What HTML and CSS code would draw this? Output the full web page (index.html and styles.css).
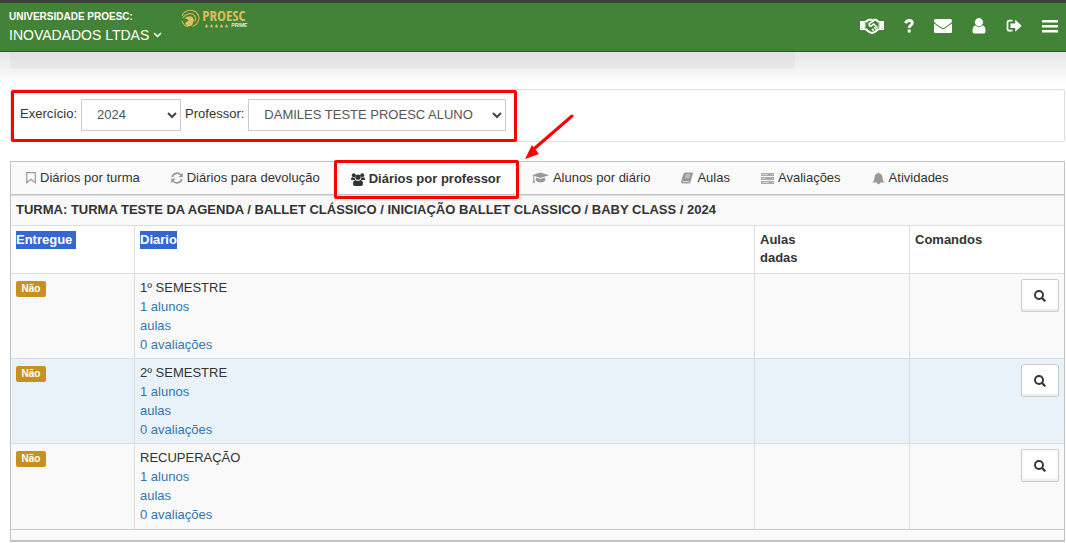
FILE: index.html
```html
<!DOCTYPE html>
<html lang="pt-BR">
<head>
<meta charset="utf-8">
<title>Diários por professor</title>
<link rel="stylesheet" href="styles.css">
</head>
<body>
<header class="topbar">
  <button class="school" type="button">
    <span class="school-label">UNIVERSIDADE PROESC:</span>
    <span class="school-name">INOVADADOS LTDAS
      <svg width="9" height="6" viewBox="0 0 9 6"><path d="M1 1l3.500 3.500L8 1" fill="none" stroke="currentColor" stroke-width="1.500"/></svg>
    </span>
  </button>
  <a class="logo" href="#" aria-label="Proesc Prime">
    <svg width="19" height="19" viewBox="0 0 19 19">
      <path d="M1 7C2.500 2.500 7 .5 11.500 1.500 17 3 19.500 8 17 13c-1 2-3 3.800-5.500 4.500" fill="none" stroke="#cdb04e" stroke-width="1.200"/>
      <path d="M1.500 9C5 4.500 10 3.500 13 6c1.800 1.600 2 4 .8 6.500M1 12c1 3 3 5 6 5.700" fill="none" stroke="#cdb04e" stroke-width="1.200"/>
      <path d="M3.500 9.500C6 7 9 6.500 11.500 8l1.500 3-2 5.500-4.500 1L4 14l3.500-2.500L6 10z" fill="#dcc162"/>
    </svg>
    <span class="logo-words">
      <span class="logo-name">PROESC</span>
      <span class="logo-sub">
        <svg width="23" height="4" viewBox="0 0 23 4" fill="#d9bd58"><path d="M0 1.500h3L2.500 3.500H.5zM5 1.500h3l-.5 2h-2zM10 1.500h3l-.5 2h-2zM15 1.500h3l-.5 2h-2zM20 1.500h3l-.5 2h-2zM1 .5h1v1H1zM6 .5h1v1H6zM11 .5h1v1h-1zM16 .5h1v1h-1zM21 .5h1v1h-1z"/></svg>
        <span>PRIME</span>
      </span>
    </span>
  </a>
  <nav class="tools">
    <a href="#" aria-label="Parcerias"><svg width="24" height="16" viewBox="0 0 24 16"><path fill="#fff" d="M0 3h5L8.500.8h3l1 .6 1-.6h3L19 3h5v9h-5l-4 3-3 .9-3-.9-4-3H0z"/><path fill="#438337" d="M6 5l3-2.300h6.500L18.200 5v4.800L14.500 13l-2.500.9L9.500 13 6 10z"/><path d="M14 2.500L9.300 5.500q-.6 2.600 1.700 2.700L13.700 6l4 4M12 11l1.800 1.800M14 9.300l2 2" fill="none" stroke="#fff" stroke-width="1.600"/><path d="M1.500 10.500h1M21.500 10.500h1M5.300 4v7M18.800 4v7" stroke="#438337" stroke-width=".7"/></svg></a>
    <a href="#" aria-label="Ajuda"><svg width="10" height="14" viewBox="0 0 10 14"><path d="M1.500 4.200C2.200 2.200 3.300 1.500 5 1.500c2 0 3.300 1 3.300 2.500C8.300 6.300 5.200 6.200 5.200 9" fill="none" stroke="#fff" stroke-width="2.800"/><path d="M3.700 10.500h3v3h-3z" fill="#fff"/></svg></a>
    <a href="#" aria-label="Mensagens"><svg width="18" height="14" viewBox="0 0 18 14"><path fill="#fff" d="M1.500 0h15Q18 0 18 1.500C18 3 17 4 16 4.700L11 8.200Q9 9.600 7 8.200L2 4.700C1 4 0 3 0 1.500Q0 0 1.500 0zM0 4.500l6.300 4.600Q9 11 11.700 9.100L18 4.500v8q0 1.500-1.500 1.500h-15Q0 14 0 12.500z"/></svg></a>
    <a href="#" aria-label="Perfil"><svg width="14" height="16" viewBox="0 0 14 16"><path fill="#fff" d="M7 0a4 4.200 0 0 1 2.800 7.300Q7 9.600 4.200 7.300A4 4.200 0 0 1 7 0zM3.500 7.600Q7 10.800 10.500 7.600 13.500 8 13.500 13q0 2.600-2.500 2.600H3Q.5 15.600.5 13 .5 8 3.500 7.600z"/></svg></a>
    <a href="#" aria-label="Sair"><svg width="16" height="14" viewBox="0 0 16 14"><path d="M6.500 1.700h-3Q1.500 1.700 1.500 3.700v6q0 2 2 2h3" fill="none" stroke="#fff" stroke-width="1.700"/><path fill="#fff" d="M4.500 4.500h4.700V.7L15.700 6.700 9.200 12.700V9H4.500z"/></svg></a>
    <a href="#" aria-label="Menu"><svg width="16" height="13" viewBox="0 0 16 13"><path fill="#fff" d="M0 0h16v2.500H0zM0 5h16v2.500H0zM0 10h16v2.500H0z"/></svg></a>
  </nav>
</header>

<main class="content">
  <div class="ribbon"></div>

  <form class="filters">
    <div class="mark"></div>
    <label for="year">Exercício:</label>
    <select id="year" class="year"><option>2024</option></select>
    <label for="teacher">Professor:</label>
    <select id="teacher" class="teacher"><option>DAMILES TESTE PROESC ALUNO</option></select>
  </form>

  <section class="widget">
    <nav class="tabs">
      <a href="#"><svg width="10" height="12" viewBox="0 0 10 12"><path d="M.7.700h8.600v10L5 7.200.7 10.700z" fill="none" stroke="#999" stroke-width="1.200"/></svg>Diários por turma</a>
      <a href="#"><svg width="12" height="12" viewBox="0 0 12 12"><path d="M1.200 5C2.200.800 7.500 0 10 3M10.800 7C9.800 11.200 4.500 12 2 9" fill="none" stroke="#999" stroke-width="1.700"/><path fill="#999" d="M11.800.7v4.500H7.300zM.2 11.300V6.800h4.500z"/></svg>Diários para devolução</a>
      <a href="#" class="active"><svg width="14" height="13" viewBox="0 0 14 13" fill="#333"><circle cx="2.800" cy="2.300" r="2"/><circle cx="11.200" cy="2.300" r="2"/><path d="M0 6.500Q0 4 1.200 4.200q1.500.8 2.700.1Q3.500 6 4.300 7H1Q0 7 0 6.500zM14 6.500Q14 4 12.800 4.200q-1.500.8-2.700.1Q10.500 6 9.700 7H13q1 0 1-.5z"/><circle cx="7" cy="4.200" r="2.600"/><path d="M4.300 6.900Q7 8.700 9.700 6.900 12 7.300 12 11q0 2-1.800 2H3.800Q2 13 2 11q0-3.700 2.300-4.100z"/></svg>Diários por professor
        <svg class="arrow" width="50" height="46" viewBox="0 0 50 46"><path d="M48 2L11 34" stroke="#f00" stroke-width="3" stroke-linecap="round"/><path d="M1 45l7-14 7 9z" fill="#f00"/></svg>
      </a>
      <a href="#"><svg width="17" height="12" viewBox="0 0 17 12" fill="#999"><path d="M8.500.5L17 3.200 8.500 6 0 3.200z"/><path d="M4 5.500l4.500 1.500L13 5.500l.3 3q-2 2-4.800 2t-4.800-2zM1.300 4h1v3.500l.6 3.500H.8l.5-3.500z"/></svg>Alunos por diário</a>
      <a href="#"><svg width="12" height="12" viewBox="0 0 12 12"><path fill="#999" d="M4 .5h7.500q.7.300.4 1L9.500 10q-.3 1.500-2 1.500H1.500Q-.3 11 .2 9L2.500 2Q3 .5 4 .5z"/><path d="M4.500 3h4.700M4 5h4.700M1.500 9.700h6.300" stroke="#fafafa" stroke-width=".7"/></svg>Aulas</a>
      <a href="#"><svg width="13" height="11" viewBox="0 0 13 11"><path fill="#aaa" d="M0 0h13v3H0zM0 4h13v3H0zM0 8h13v3H0z"/><path d="M1 1.500h6M1 5.500h3M1 9.500h7M11 1.500h1M11 5.500h1M11 9.500h1" stroke="#d5d5d5"/></svg>Avaliações</a>
      <a href="#"><svg width="13" height="13" viewBox="0 0 13 13"><path fill="#999" d="M5.800.5h1.400v1Q10.500 2 10.500 5.500q0 3.500 2.300 5H8.200a1.700 1.700 0 0 1-3.400 0H.2q2.300-1.500 2.300-5 0-3.500 3.300-4z"/></svg>Atividades</a>
    </nav>

    <table class="diaries">
      <colgroup><col class="col-state"><col><col class="col-side"><col class="col-side"></colgroup>
      <thead>
        <tr class="class-row"><th colspan="4">TURMA: TURMA TESTE DA AGENDA / BALLET CLÁSSICO / INICIAÇÃO BALLET CLASSICO / BABY CLASS / 2024</th></tr>
        <tr class="head-row">
          <th><span class="selected">Entregue&nbsp;</span></th>
          <th><span class="selected">Diario</span></th>
          <th>Aulas<br>dadas</th>
          <th>Comandos</th>
        </tr>
      </thead>
      <tbody>
        <tr>
          <td><span class="badge">Não</span></td>
          <td><div class="term">1º SEMESTRE</div><a href="#">1 alunos</a><a href="#">aulas</a><a href="#">0 avaliações</a></td>
          <td></td>
          <td><button class="view" type="button" aria-label="Ver diário"><svg width="12" height="12" viewBox="0 0 12 12"><circle cx="5" cy="5" r="4" fill="none" stroke="#333" stroke-width="1.900"/><path d="M8 8l3.300 3.300" stroke="#333" stroke-width="2.200"/></svg></button></td>
        </tr>
        <tr class="tinted">
          <td><span class="badge">Não</span></td>
          <td><div class="term">2º SEMESTRE</div><a href="#">1 alunos</a><a href="#">aulas</a><a href="#">0 avaliações</a></td>
          <td></td>
          <td><button class="view" type="button" aria-label="Ver diário"><svg width="12" height="12" viewBox="0 0 12 12"><circle cx="5" cy="5" r="4" fill="none" stroke="#333" stroke-width="1.900"/><path d="M8 8l3.300 3.300" stroke="#333" stroke-width="2.200"/></svg></button></td>
        </tr>
        <tr>
          <td><span class="badge">Não</span></td>
          <td><div class="term">RECUPERAÇÃO</div><a href="#">1 alunos</a><a href="#">aulas</a><a href="#">0 avaliações</a></td>
          <td></td>
          <td><button class="view" type="button" aria-label="Ver diário"><svg width="12" height="12" viewBox="0 0 12 12"><circle cx="5" cy="5" r="4" fill="none" stroke="#333" stroke-width="1.900"/><path d="M8 8l3.300 3.300" stroke="#333" stroke-width="2.200"/></svg></button></td>
        </tr>
      </tbody>
    </table>
    <div class="widget-foot"></div>
  </section>
</main>
</body>
</html>
```
FILE: styles.css
```css
* { box-sizing: border-box; }
body {
  margin: 0;
  background: #fff;
  color: #333;
  font: 13px/18px "Liberation Sans", Arial, sans-serif;
}
a { color: #3276b1; text-decoration: none; }
svg { flex: none; }
button { font: inherit; cursor: pointer; }

.topbar {
  display: flex;
  align-items: flex-start;
  height: 52px;
  padding: 0 8px 0 9px;
  background: #438337;
  border-top: 3px solid #3d3d3d;
  border-bottom: 1px solid #2c5e24;
}
.school {
  display: flex;
  flex-direction: column;
  align-items: flex-start;
  margin-top: 5px;
  padding: 0;
  border: 0;
  background: none;
  color: #fff;
}
.school-label { font-size: 10px; font-weight: bold; line-height: 18px; }
.school-name { display: flex; align-items: center; gap: 4px; font-size: 14px; line-height: 18px; }
.logo { display: flex; gap: 2px; margin: 6px 0 0 19px; color: #d9bd58; }
.logo-words { display: flex; flex-direction: column; gap: 1px; }
.logo-name { font: bold 15px/13px "Liberation Sans Narrow", "Open Sans Condensed", "Liberation Sans", sans-serif; }
.logo-sub { display: flex; align-items: center; gap: 3px; padding-left: 3px; font: italic bold 5px/5px "Liberation Sans", sans-serif; color: #e8edda; }
.tools { display: flex; align-items: center; gap: 20px; height: 46px; margin-left: auto; }
.tools a { display: flex; }

.content { padding: 0 1px 0 10px; background: linear-gradient(#e6e6e6, #fff 34px); }
.ribbon { width: 75%; max-width: 785px; height: 17px; background: linear-gradient(#e1dfe1, #ebe9eb); border-radius: 0 0 4px 4px; }

.filters {
  position: relative;
  display: flex;
  align-items: flex-start;
  gap: 4px;
  height: 53px;
  margin-top: 20px;
  padding: 9px;
  background: #fff;
  border: 1px solid #ddd;
  border-radius: 2px;
}
.filters label { line-height: 30px; }
.filters select {
  appearance: none;
  height: 32px;
  padding: 0 15px;
  border: 1px solid #ccc;
  border-radius: 0;
  color: #555;
  font: inherit;
  background: #fff url("data:image/svg+xml,%3Csvg xmlns='http://www.w3.org/2000/svg' width='10' height='7'%3E%3Cpath d='M1 1l4 4 4-4' fill='none' stroke='%23444' stroke-width='2'/%3E%3C/svg%3E") no-repeat right 3px center;
}
.filters .year { width: 100px; }
.filters .teacher { width: 258px; }
.mark { position: absolute; inset: 0 auto -1px 0; width: 506px; border: 3px solid #f00; border-radius: 2px; pointer-events: none; }

.widget { margin-top: 19px; border: 1px solid #c2c2c2; border-bottom-width: 2px; background: #fafafa; }
.tabs { display: flex; height: 33px; border-bottom: 1px solid #c2c2c2; }
.tabs a { display: flex; align-items: center; gap: 4px; padding: 0 16px 0 15px; color: #333; white-space: nowrap; }
.tabs .active { position: relative; padding-top: 2px; background: #fff; font-weight: bold; }
.tabs .active::after { content: ""; position: absolute; inset: -2px -2px -5px; border: 3px solid #f00; border-radius: 2px; }
.arrow { position: absolute; right: -57px; top: -48px; }

.diaries { width: 100%; table-layout: fixed; border-collapse: separate; border-spacing: 0; border-top: 1px solid #ddd; }
.col-state { width: 123px; }
.col-side { width: 155px; }
.diaries th, .diaries td {
  padding: 4px 5px;
  border-bottom: 1px solid #ddd;
  border-left: 1px solid #ddd;
  text-align: left;
  vertical-align: top;
}
.diaries tr > :first-child { border-left: 0; }
.diaries .class-row th { height: 30px; padding-top: 5px; background: #f9f9f9; }
.diaries .head-row th { height: 48px; padding-top: 5px; background: #fff; }
.diaries td { height: 85px; background: #f9f9f9; }
.diaries .tinted td { background: #eaf2f9; }
.diaries tbody tr:last-child td { height: 86px; border-bottom-color: #c8c8c8; }
.diaries td a { display: block; line-height: 19px; }
.selected { display: inline-block; background: #3367d1; color: #fff; }
.term { line-height: 19px; }
.badge {
  display: block;
  width: 30px;
  margin-top: 3px;
  border-radius: 2px;
  background: #c79121;
  color: #fff;
  font-size: 10px;
  font-weight: bold;
  line-height: 16px;
  text-align: center;
}
.view {
  display: flex;
  align-items: center;
  justify-content: center;
  width: 38px;
  height: 33px;
  margin: 1px 0 0 auto;
  padding: 0;
  background: #fff;
  border: 1px solid #ccc;
  border-radius: 2px;
  box-shadow: inset 0 -2px 0 #eee;
}
.widget-foot { height: 10px; }
```
